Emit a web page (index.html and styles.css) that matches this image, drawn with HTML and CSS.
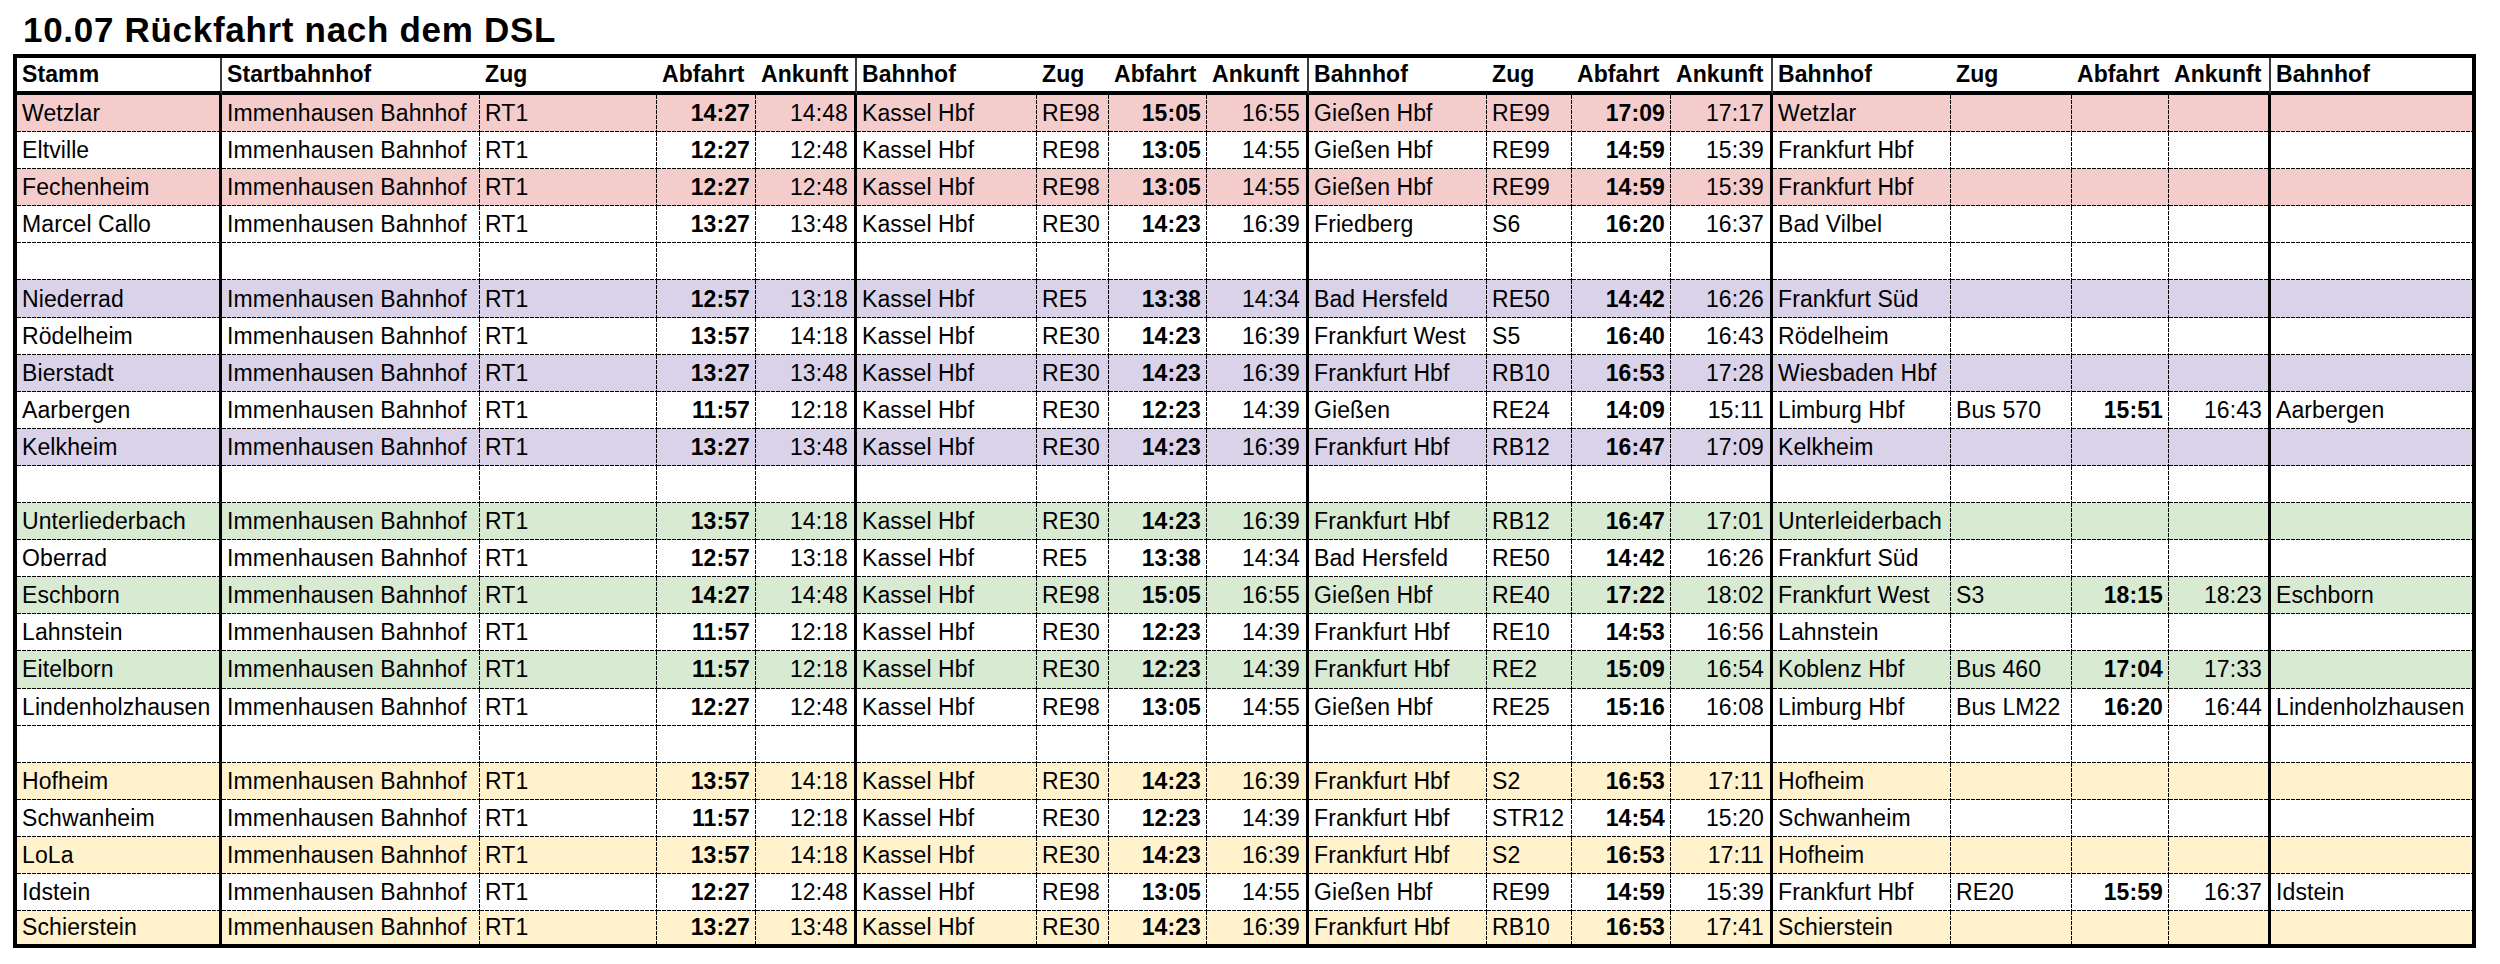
FILE: index.html
```html
<!DOCTYPE html>
<html lang="de">
<head>
<meta charset="utf-8">
<title>10.07 Rückfahrt nach dem DSL</title>
<link rel="stylesheet" href="styles.css">
</head>
<body>
<main class="page">
<h1 class="title">10.07 Rückfahrt nach dem DSL</h1>
<table class="sheet">
<colgroup>
<col class="c-stamm"><col class="c-start"><col class="c-zug1"><col class="c-abf1"><col class="c-ank1">
<col class="c-bhf2"><col class="c-zug2"><col class="c-abf2"><col class="c-ank2">
<col class="c-bhf3"><col class="c-zug3"><col class="c-abf3"><col class="c-ank3">
<col class="c-bhf4"><col class="c-zug4"><col class="c-abf4"><col class="c-ank4">
<col class="c-ziel">
</colgroup>
<thead>
<tr><th>Stamm</th><th>Startbahnhof</th><th>Zug</th><th>Abfahrt</th><th>Ankunft</th><th>Bahnhof</th><th>Zug</th><th>Abfahrt</th><th>Ankunft</th><th>Bahnhof</th><th>Zug</th><th>Abfahrt</th><th>Ankunft</th><th>Bahnhof</th><th>Zug</th><th>Abfahrt</th><th>Ankunft</th><th>Bahnhof</th></tr>
</thead>
<tbody>
<tr class="pink"><td>Wetzlar</td><td>Immenhausen Bahnhof</td><td>RT1</td><td>14:27</td><td>14:48</td><td>Kassel Hbf</td><td>RE98</td><td>15:05</td><td>16:55</td><td>Gießen Hbf</td><td>RE99</td><td>17:09</td><td>17:17</td><td>Wetzlar</td><td></td><td></td><td></td><td></td></tr>
<tr><td>Eltville</td><td>Immenhausen Bahnhof</td><td>RT1</td><td>12:27</td><td>12:48</td><td>Kassel Hbf</td><td>RE98</td><td>13:05</td><td>14:55</td><td>Gießen Hbf</td><td>RE99</td><td>14:59</td><td>15:39</td><td>Frankfurt Hbf</td><td></td><td></td><td></td><td></td></tr>
<tr class="pink"><td>Fechenheim</td><td>Immenhausen Bahnhof</td><td>RT1</td><td>12:27</td><td>12:48</td><td>Kassel Hbf</td><td>RE98</td><td>13:05</td><td>14:55</td><td>Gießen Hbf</td><td>RE99</td><td>14:59</td><td>15:39</td><td>Frankfurt Hbf</td><td></td><td></td><td></td><td></td></tr>
<tr><td>Marcel Callo</td><td>Immenhausen Bahnhof</td><td>RT1</td><td>13:27</td><td>13:48</td><td>Kassel Hbf</td><td>RE30</td><td>14:23</td><td>16:39</td><td>Friedberg</td><td>S6</td><td>16:20</td><td>16:37</td><td>Bad Vilbel</td><td></td><td></td><td></td><td></td></tr>
<tr><td></td><td></td><td></td><td></td><td></td><td></td><td></td><td></td><td></td><td></td><td></td><td></td><td></td><td></td><td></td><td></td><td></td><td></td></tr>
<tr class="purple"><td>Niederrad</td><td>Immenhausen Bahnhof</td><td>RT1</td><td>12:57</td><td>13:18</td><td>Kassel Hbf</td><td>RE5</td><td>13:38</td><td>14:34</td><td>Bad Hersfeld</td><td>RE50</td><td>14:42</td><td>16:26</td><td>Frankfurt Süd</td><td></td><td></td><td></td><td></td></tr>
<tr><td>Rödelheim</td><td>Immenhausen Bahnhof</td><td>RT1</td><td>13:57</td><td>14:18</td><td>Kassel Hbf</td><td>RE30</td><td>14:23</td><td>16:39</td><td>Frankfurt West</td><td>S5</td><td>16:40</td><td>16:43</td><td>Rödelheim</td><td></td><td></td><td></td><td></td></tr>
<tr class="purple"><td>Bierstadt</td><td>Immenhausen Bahnhof</td><td>RT1</td><td>13:27</td><td>13:48</td><td>Kassel Hbf</td><td>RE30</td><td>14:23</td><td>16:39</td><td>Frankfurt Hbf</td><td>RB10</td><td>16:53</td><td>17:28</td><td>Wiesbaden Hbf</td><td></td><td></td><td></td><td></td></tr>
<tr><td>Aarbergen</td><td>Immenhausen Bahnhof</td><td>RT1</td><td>11:57</td><td>12:18</td><td>Kassel Hbf</td><td>RE30</td><td>12:23</td><td>14:39</td><td>Gießen</td><td>RE24</td><td>14:09</td><td>15:11</td><td>Limburg Hbf</td><td>Bus 570</td><td>15:51</td><td>16:43</td><td>Aarbergen</td></tr>
<tr class="purple"><td>Kelkheim</td><td>Immenhausen Bahnhof</td><td>RT1</td><td>13:27</td><td>13:48</td><td>Kassel Hbf</td><td>RE30</td><td>14:23</td><td>16:39</td><td>Frankfurt Hbf</td><td>RB12</td><td>16:47</td><td>17:09</td><td>Kelkheim</td><td></td><td></td><td></td><td></td></tr>
<tr><td></td><td></td><td></td><td></td><td></td><td></td><td></td><td></td><td></td><td></td><td></td><td></td><td></td><td></td><td></td><td></td><td></td><td></td></tr>
<tr class="green"><td>Unterliederbach</td><td>Immenhausen Bahnhof</td><td>RT1</td><td>13:57</td><td>14:18</td><td>Kassel Hbf</td><td>RE30</td><td>14:23</td><td>16:39</td><td>Frankfurt Hbf</td><td>RB12</td><td>16:47</td><td>17:01</td><td>Unterleiderbach</td><td></td><td></td><td></td><td></td></tr>
<tr><td>Oberrad</td><td>Immenhausen Bahnhof</td><td>RT1</td><td>12:57</td><td>13:18</td><td>Kassel Hbf</td><td>RE5</td><td>13:38</td><td>14:34</td><td>Bad Hersfeld</td><td>RE50</td><td>14:42</td><td>16:26</td><td>Frankfurt Süd</td><td></td><td></td><td></td><td></td></tr>
<tr class="green"><td>Eschborn</td><td>Immenhausen Bahnhof</td><td>RT1</td><td>14:27</td><td>14:48</td><td>Kassel Hbf</td><td>RE98</td><td>15:05</td><td>16:55</td><td>Gießen Hbf</td><td>RE40</td><td>17:22</td><td>18:02</td><td>Frankfurt West</td><td>S3</td><td>18:15</td><td>18:23</td><td>Eschborn</td></tr>
<tr><td>Lahnstein</td><td>Immenhausen Bahnhof</td><td>RT1</td><td>11:57</td><td>12:18</td><td>Kassel Hbf</td><td>RE30</td><td>12:23</td><td>14:39</td><td>Frankfurt Hbf</td><td>RE10</td><td>14:53</td><td>16:56</td><td>Lahnstein</td><td></td><td></td><td></td><td></td></tr>
<tr class="green"><td>Eitelborn</td><td>Immenhausen Bahnhof</td><td>RT1</td><td>11:57</td><td>12:18</td><td>Kassel Hbf</td><td>RE30</td><td>12:23</td><td>14:39</td><td>Frankfurt Hbf</td><td>RE2</td><td>15:09</td><td>16:54</td><td>Koblenz Hbf</td><td>Bus 460</td><td>17:04</td><td>17:33</td><td></td></tr>
<tr><td>Lindenholzhausen</td><td>Immenhausen Bahnhof</td><td>RT1</td><td>12:27</td><td>12:48</td><td>Kassel Hbf</td><td>RE98</td><td>13:05</td><td>14:55</td><td>Gießen Hbf</td><td>RE25</td><td>15:16</td><td>16:08</td><td>Limburg Hbf</td><td>Bus LM22</td><td>16:20</td><td>16:44</td><td>Lindenholzhausen</td></tr>
<tr><td></td><td></td><td></td><td></td><td></td><td></td><td></td><td></td><td></td><td></td><td></td><td></td><td></td><td></td><td></td><td></td><td></td><td></td></tr>
<tr class="yellow"><td>Hofheim</td><td>Immenhausen Bahnhof</td><td>RT1</td><td>13:57</td><td>14:18</td><td>Kassel Hbf</td><td>RE30</td><td>14:23</td><td>16:39</td><td>Frankfurt Hbf</td><td>S2</td><td>16:53</td><td>17:11</td><td>Hofheim</td><td></td><td></td><td></td><td></td></tr>
<tr><td>Schwanheim</td><td>Immenhausen Bahnhof</td><td>RT1</td><td>11:57</td><td>12:18</td><td>Kassel Hbf</td><td>RE30</td><td>12:23</td><td>14:39</td><td>Frankfurt Hbf</td><td>STR12</td><td>14:54</td><td>15:20</td><td>Schwanheim</td><td></td><td></td><td></td><td></td></tr>
<tr class="yellow"><td>LoLa</td><td>Immenhausen Bahnhof</td><td>RT1</td><td>13:57</td><td>14:18</td><td>Kassel Hbf</td><td>RE30</td><td>14:23</td><td>16:39</td><td>Frankfurt Hbf</td><td>S2</td><td>16:53</td><td>17:11</td><td>Hofheim</td><td></td><td></td><td></td><td></td></tr>
<tr><td>Idstein</td><td>Immenhausen Bahnhof</td><td>RT1</td><td>12:27</td><td>12:48</td><td>Kassel Hbf</td><td>RE98</td><td>13:05</td><td>14:55</td><td>Gießen Hbf</td><td>RE99</td><td>14:59</td><td>15:39</td><td>Frankfurt Hbf</td><td>RE20</td><td>15:59</td><td>16:37</td><td>Idstein</td></tr>
<tr class="yellow"><td>Schierstein</td><td>Immenhausen Bahnhof</td><td>RT1</td><td>13:27</td><td>13:48</td><td>Kassel Hbf</td><td>RE30</td><td>14:23</td><td>16:39</td><td>Frankfurt Hbf</td><td>RB10</td><td>16:53</td><td>17:41</td><td>Schierstein</td><td></td><td></td><td></td><td></td></tr>
</tbody>
</table>
</main>
</body>
</html>
```
FILE: styles.css
```css
* {
  box-sizing: border-box;
}

html, body {
  margin: 0;
  background: #fff;
  color: #000;
  font-family: "Liberation Sans", Arial, sans-serif;
}

.page {
  padding: 10px 0 0 13px;
}

.title {
  margin: 0 0 4px 10px;
  font-size: 35px;
  line-height: 40px;
  font-weight: 700;
  letter-spacing: 0.7px;
}

.sheet {
  border-collapse: separate;
  border-spacing: 0;
  table-layout: fixed;
  width: 2463px;
  border-left: 4px solid #000;
  border-top: 4px solid #000;
  font-size: 23px;
  letter-spacing: 0.1px;
}

.c-stamm { width: 205px; }
.c-start { width: 258px; }
.c-zug1 { width: 177px; }
.c-abf1 { width: 99px; }
.c-ank1 { width: 101px; }
.c-bhf2 { width: 180px; }
.c-zug2 { width: 72px; }
.c-abf2 { width: 98px; }
.c-ank2 { width: 102px; }
.c-bhf3 { width: 178px; }
.c-zug3 { width: 85px; }
.c-abf3 { width: 99px; }
.c-ank3 { width: 102px; }
.c-bhf4 { width: 178px; }
.c-zug4 { width: 121px; }
.c-abf4 { width: 97px; }
.c-ank4 { width: 102px; }
.c-ziel { width: 205px; }

.sheet th,
.sheet td {
  padding: 0 5px 0 5px;
  white-space: nowrap;
  overflow: hidden;
  vertical-align: middle;
  text-align: left;
}

.sheet th {
  height: 37px;
  font-weight: 700;
  background: #fff;
  border-bottom: 4px solid #000;
}

.sheet th:nth-child(4n+1) {
  border-right: 2px solid #3c3c3c;
}

.sheet th:last-child {
  border-right: 4px solid #000;
}

.sheet td {
  height: 37.1px;
  font-weight: 400;
  background-image:
    repeating-linear-gradient(90deg, #000 0 4px, transparent 4px 5px),
    repeating-linear-gradient(180deg, #000 0 4px, transparent 4px 5px);
  background-size: 100% 1px, 1px 100%;
  background-position: left bottom, right top;
  background-repeat: no-repeat;
}

/* group boundaries: solid thick line instead of dashed */
.sheet td:nth-child(4n+1) {
  border-right: 3px solid #000;
  background-size: 100% 1px, 0 0;
}

.sheet td:last-child {
  border-right: 4px solid #000;
  background-size: 100% 1px, 0 0;
}

/* times */
.sheet td:nth-child(4n),
.sheet td:nth-child(4n+5) {
  text-align: right;
  padding-right: 6px;
}

.sheet td:nth-child(4n) {
  font-weight: 700;
}

.sheet tbody tr:last-child td {
  border-bottom: 4px solid #000;
  background-size: 0 0, 1px 100%;
}

.sheet tbody tr:last-child td:nth-child(4n+1),
.sheet tbody tr:last-child td:last-child {
  background-size: 0 0, 0 0;
}

.pink td { background-color: #f4cccc; }
.purple td { background-color: #d9d2e9; }
.green td { background-color: #d9ead3; }
.yellow td { background-color: #fff2cc; }
```
